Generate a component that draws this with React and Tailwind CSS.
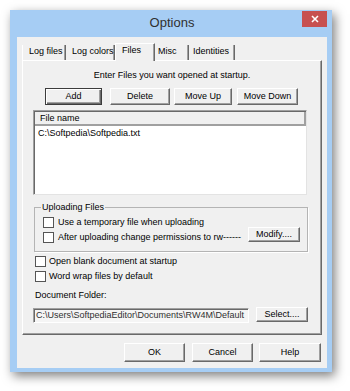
const btn3d =
    "bg-[#f0f0f0] border border-t-white border-l-white border-r-[#696969] border-b-[#696969] shadow-[inset_-1px_-1px_0_#a0a0a0] flex items-center justify-center leading-none";

const Btn = ({ children, className = "" }) => (
    <div className={`${btn3d} ${className}`}>{children}</div>
);

const Check = ({ label, className = "", gap = "ml-[4px]" }) => (
    <div className={`flex items-center h-[12px] ${className}`}>
        <div className="w-[11px] h-[11px] border border-[#555] bg-white shrink-0"></div>
        <span className={`${gap} leading-[12px] whitespace-nowrap`}>{label}</span>
    </div>
);

const tabs = [
    { name: "Log files", w: "w-[44px]", pl: "pl-[6px]" },
    { name: "Log colors", w: "w-[49px]", pl: "pl-[6px]" },
    { name: "Files", w: "w-[40px]", pl: "pl-[6px]", active: true },
    { name: "Misc", w: "w-[34px]", pl: "pl-[3px]" },
    { name: "Identities", w: "w-[46px]", pl: "pl-[4px]" },
];

const Tabs = () => (
    <div className="flex items-end h-[17px]">
        {tabs.map((t, i) =>
            t.active ? (
                <div
                    key={t.name}
                    className={`${t.w} ${t.pl} relative z-10 -mb-px h-[18px] pt-[1px] leading-[11px] bg-[#f0f0f0] border-l border-t border-l-white border-t-white border-r border-r-[#696969] shadow-[inset_-1px_0_0_#a0a0a0]`}
                >
                    {t.name}
                </div>
            ) : (
                <div
                    key={t.name}
                    className={`${t.w} ${t.pl} h-[15px] pt-[1px] leading-[11px] border-r border-r-[#696969] shadow-[inset_-1px_0_0_#a0a0a0] ${i === 0 ? "border-l border-l-white" : ""}`}
                >
                    {t.name}
                </div>
            )
        )}
    </div>
);

export default function App() {
    return (
        <div className="w-[350px] h-[391px] bg-white pt-[10px] pl-[10px] overflow-hidden font-['Liberation_Sans',Arial,sans-serif] text-[9px] text-black">
            <div className="w-[322px] h-[362px] bg-[#a6cdf4] pl-[7px] pr-[5px] pb-[4px] flex flex-col shadow-[3px_4px_10px_rgba(0,0,0,0.5)]">
                {/* title bar */}
                <div className="h-[27px] flex items-start shrink-0">
                    <div className="w-[25px]"></div>
                    <div className="flex-1 text-center pt-[4px] text-[13px] leading-[18px] text-[#303030]">
                        Options
                    </div>
                    <div className="w-[25px] h-[16px] mt-[1px] bg-[#c75050] flex items-center justify-center">
                        <svg width="8" height="8" viewBox="0 0 8 8">
                            <path d="M1 1L7 7M7 1L1 7" stroke="white" strokeWidth="1.6" />
                        </svg>
                    </div>
                </div>

                {/* client */}
                <div className="flex-1 bg-[#f0f0f0] px-[5px] pt-[6px] flex flex-col">
                    <Tabs />
                    <div className="h-[275px] border border-t-white border-l-white border-r-[#696969] border-b-[#696969] shadow-[inset_-1px_-1px_0_#a0a0a0] flex flex-col">
                        <div className="pt-[8px] leading-[12px] text-center">
                            Enter Files you want opened at startup.
                        </div>

                        <div className="flex mt-[7px] ml-[22px]">
                            <div className="w-[57px] h-[17px] bg-[#f0f0f0] border border-[#3c3c3c] shadow-[inset_1px_1px_0_#fff,inset_-1px_-1px_0_#696969,inset_-2px_-2px_0_#a0a0a0] flex items-center justify-center leading-none">
                                Add
                            </div>
                            <Btn className="w-[60px] h-[17px] ml-[8px]">Delete</Btn>
                            <Btn className="w-[58px] h-[17px] ml-[4px]">Move Up</Btn>
                            <Btn className="w-[61px] h-[17px] ml-[5px]">Move Down</Btn>
                        </div>

                        {/* file list */}
                        <div className="ml-[10px] mt-[5px] w-[274px] h-[85px] bg-white border border-t-[#a0a0a0] border-l-[#a0a0a0] border-r-[#e3e3e3] border-b-[#e3e3e3] shadow-[inset_1px_1px_0_#696969] flex flex-col">
                            <div className="ml-px mt-px h-[14px] bg-[#f0f0f0] border-b-2 border-r-2 border-[#a0a0a0] pl-[5px] leading-[12px]">
                                File name
                            </div>
                            <div className="pl-[4px] pt-[1px] leading-[12px]">
                                C:\Softpedia\Softpedia.txt
                            </div>
                        </div>

                        {/* uploading group */}
                        <fieldset className="ml-[11px] mt-[6px] w-[274px] border border-[#b4b4b4] shadow-[1px_1px_0_#fff] pb-[8px]">
                            <legend className="ml-[6px] px-[1px] leading-[12px]">Uploading Files</legend>
                            <Check label="Use a temporary file when uploading" className="ml-[8px] mt-[3px]" />
                            <div className="flex items-start mt-[-1px]">
                                <Check
                                    label="After uploading change permissions to rw------"
                                    className="ml-[8px] mt-[4px]"
                                />
                                <div className="flex-1"></div>
                                <Btn className="w-[52px] h-[15px] mr-[7px]">Modify....</Btn>
                            </div>
                        </fieldset>

                        <Check label="Open blank document at startup" className="ml-[12px] mt-[3px]" gap="ml-[3px]" />
                        <Check label="Word wrap files by default" className="ml-[12px] mt-[3px]" gap="ml-[3px]" />

                        <div className="ml-[12px] mt-[7px] leading-[12px]">Document Folder:</div>

                        <div className="flex items-start mt-[6px]">
                            <div className="ml-[10px] mt-px w-[216px] h-[15px] bg-[#f5f5f5] border border-t-[#a0a0a0] border-l-[#a0a0a0] border-r-white border-b-white shadow-[inset_1px_1px_0_#696969] pl-[2px] leading-[13px] text-[#303030] whitespace-nowrap overflow-hidden">
                                C:\Users\SoftpediaEditor\Documents\RW4M\Default
                            </div>
                            <Btn className="w-[52px] h-[15px] ml-[7px]">Select....</Btn>
                        </div>
                    </div>

                    <div className="flex justify-end mt-[8px] mr-[1px]">
                        <Btn className="w-[61px] h-[19px]">OK</Btn>
                        <Btn className="w-[61px] h-[19px] ml-[7px]">Cancel</Btn>
                        <Btn className="w-[62px] h-[19px] ml-[6px]">Help</Btn>
                    </div>
                </div>
            </div>
        </div>
    );
}
